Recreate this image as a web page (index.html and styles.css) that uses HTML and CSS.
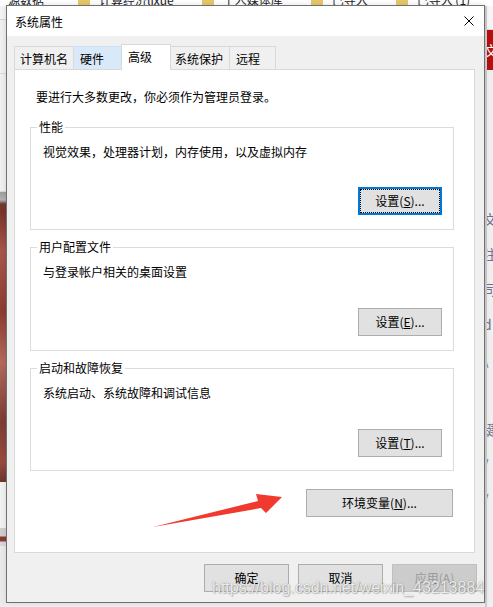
FILE: index.html
```html
<!DOCTYPE html>
<html lang="zh-CN">
<head>
<meta charset="utf-8">
<title>系统属性</title>
<link rel="stylesheet" href="styles.css">
</head>
<body>
<div class="desktop">
  <div class="files-row">
    <span class="file-name">源数据</span>
    <span class="folder"></span><span class="file-name">计算经济lixue</span>
    <span class="folder"></span><span class="file-name">个人媒体库</span>
    <span class="folder"></span><span class="file-name">已导入</span>
    <span class="folder"></span><span class="file-name">已导入 (1)</span>
  </div>
  <div class="desktop-main">
    <div class="side-left">
      <div class="sl-a"></div>
      <div class="sl-b"></div>
      <div class="sl-c"></div>
      <div class="sl-photo"></div>
      <div class="sl-d"></div>
      <div class="sl-e"></div>
      <div class="sl-f"></div>
    </div>
    <div class="side-right">
      <div class="sr-a"></div>
      <div class="sr-red">文</div>
      <div class="sr-list">
        <span>文</span><span>注</span><span>司</span><span>d</span><span>\</span><span></span><span>键</span><span>/</span><span>/</span>
      </div>
    </div>
  </div>
</div>

<div class="dialog">
  <div class="titlebar">
    <span class="title">系统属性</span>
    <svg class="close" width="10" height="10" viewBox="0 0 10 10">
      <path d="M0.5 0.5 L9.5 9.5 M9.5 0.5 L0.5 9.5" stroke="#000" stroke-width="1" fill="none"/>
    </svg>
  </div>
  <div class="dialog-body">
    <div class="tabs">
      <div class="tab tab-name">计算机名</div>
      <div class="tab tab-hw hover">硬件</div>
      <div class="tab tab-adv selected">高级</div>
      <div class="tab tab-prot">系统保护</div>
      <div class="tab tab-remote">远程</div>
    </div>
    <div class="panel">
      <p class="note">要进行大多数更改，你必须作为管理员登录。</p>

      <div class="group group-perf">
        <span class="legend">性能</span>
        <p class="desc">视觉效果，处理器计划，内存使用，以及虚拟内存</p>
        <button class="btn btn-set focused">设置(<u>S</u>)...</button>
      </div>

      <div class="group group-profile">
        <span class="legend">用户配置文件</span>
        <p class="desc">与登录帐户相关的桌面设置</p>
        <button class="btn btn-set">设置(<u>E</u>)...</button>
      </div>

      <div class="group group-startup">
        <span class="legend">启动和故障恢复</span>
        <p class="desc">系统启动、系统故障和调试信息</p>
        <button class="btn btn-set">设置(<u>T</u>)...</button>
      </div>

      <div class="env-row">
        <button class="btn btn-env">环境变量(<u>N</u>)...</button>
      </div>
    </div>
    <div class="footer">
      <button class="btn btn-foot">确定</button>
      <button class="btn btn-foot">取消</button>
      <button class="btn btn-foot disabled">应用(A)</button>
    </div>
  </div>
</div>

<svg class="arrow" width="493" height="607" viewBox="0 0 493 607">
  <polygon points="153,527 258,501 256,494 282,497 266,513 261,508" fill="#f03a30"/>
</svg>

<div class="watermark">https://blog.csdn.net/weixin_43213884</div>
</body>
</html>
```

FILE: styles.css
```css
* {
  box-sizing: border-box;
}

html, body {
  margin: 0;
  padding: 0;
}

body {
  width: 493px;
  height: 607px;
  overflow: hidden;
  position: relative;
  font-family: "Noto Sans CJK SC", "Noto Sans", sans-serif;
  font-size: 12px;
  color: #000;
  background: #f0f0f0;
}

/* ---------- desktop behind the dialog ---------- */
.desktop {
  width: 493px;
  height: 607px;
  display: flex;
  flex-direction: column;
}

.files-row {
  height: 6px;
  overflow: hidden;
  background: #fff;
  display: flex;
  align-items: flex-end;
  padding-left: 8px;
  flex: none;
}

.file-name {
  font-size: 12px;
  line-height: 14px;
  color: #1a1a2a;
  margin-bottom: -1px;
  white-space: nowrap;
}

.folder {
  width: 12px;
  height: 6px;
  background: #e8c66a;
  margin: 0 9px 0 28px;
  flex: none;
}

.file-name:first-child + .folder {
  margin-left: 34px;
}

.desktop-main {
  flex: 1;
  display: flex;
  justify-content: space-between;
}

.side-left {
  width: 6px;
  display: flex;
  flex-direction: column;
}

.sl-a {
  height: 14px;
  background: #f4f4f4;
  border-bottom: 1px solid #d4d4d4;
}

.sl-b {
  height: 54px;
  background: #f0f0f0;
  border-bottom: 1px solid #dadada;
}

.sl-c {
  height: 118px;
  background: #f0f0f0;
  border-bottom: 1px solid #dadada;
}

.sl-photo {
  height: 290px;
  background: linear-gradient(180deg, #9e9e9e 0, #b4b4b4 8px, #6e3a32 12px, #7a332b 20px, #a9574b 60px, #8e3b32 120px, #b36a5d 170px, #7d3d35 230px, #9b4b40 270px, #6a3730 290px);
}

.sl-d {
  height: 46px;
  background: #f2f2f2;
}

.sl-e {
  height: 18px;
  background: linear-gradient(180deg, #cfcfcf 0, #cfcfcf 8px, #8a3c34 9px, #8a3c34 13px, #d8d8d8 14px);
}

.sl-f {
  flex: 1;
  background: #ebebeb;
}

.side-right {
  width: 8px;
  display: flex;
  flex-direction: column;
  border-left: 2px solid #cfcfcf;
  background: #f0f0f0;
  overflow: hidden;
}

.sr-a {
  height: 24px;
  background: #f7f7f7;
  border-bottom: 1px solid #dcdcdc;
}

.sr-red {
  height: 40px;
  background: #b80f0f;
  color: #fff;
  font-size: 14px;
  line-height: 40px;
  text-indent: -3px;
  overflow: hidden;
}

.sr-list {
  display: flex;
  flex-direction: column;
  padding-top: 140px;
  color: #6f6f8f;
  font-size: 14px;
  line-height: 18px;
  text-indent: -4px;
  overflow: hidden;
}

.sr-list span {
  height: 35px;
  display: block;
  white-space: nowrap;
}

/* ---------- dialog window ---------- */
.dialog {
  position: absolute;
  left: 6px;
  top: 5px;
  width: 479px;
  height: 598px;
  border: 1px solid #707070;
  background: #f0f0f0;
  display: flex;
  flex-direction: column;
  box-shadow: 0 0 6px rgba(0, 0, 0, 0.12);
}

.titlebar {
  height: 30px;
  background: #fff;
  display: flex;
  align-items: center;
  justify-content: space-between;
  padding: 0 10px 0 8px;
  flex: none;
}

.title {
  font-size: 12px;
  line-height: 16px;
  margin-top: 1px;
}

.close {
  display: block;
}

.dialog-body {
  flex: 1;
  padding: 9px 9px 0 7px;
  display: flex;
  flex-direction: column;
}

/* tab strip */
.tabs {
  height: 25px;
  display: flex;
  align-items: flex-end;
  margin-bottom: -1px;
  position: relative;
  z-index: 1;
  flex: none;
}

.tab {
  height: 23px;
  margin-bottom: 1px;
  border: 1px solid #d9d9d9;
  border-bottom: none;
  border-right: none;
  background: #f0f0f0;
  display: flex;
  align-items: center;
  justify-content: flex-start;
  font-size: 12px;
  line-height: 16px;
  padding: 1px 0 0 6px;
}

.tab-name { width: 59px; padding-left: 5px; }
.tab-hw { width: 48px; }
.tab-adv { width: 50px; }
.tab-prot { width: 58px; padding-left: 4px; }
.tab-remote { width: 47px; border-right: 1px solid #d9d9d9; }

.tab.hover {
  background: #d8eaf9;
  border-color: #cfe0f0;
  border-left-color: #d9d9d9;
}

.tab.selected {
  height: 26px;
  margin-bottom: 0;
  background: #fff;
  border-right: 1px solid #d9d9d9;
  padding-top: 0;
  padding-bottom: 2px;
}

.tab.selected + .tab {
  border-left: none;
}

/* tab page */
.panel {
  height: 484px;
  flex: none;
  background: #fff;
  border: 1px solid #d9d9d9;
  padding: 19px 20px 0 15px;
  display: flex;
  flex-direction: column;
}

.note {
  margin: 0 0 0 6px;
  line-height: 16px;
}

.group {
  border: 1px solid #dcdcdc;
  display: flex;
  flex-direction: column;
  align-items: flex-start;
  padding: 0 11px 14px 12px;
}

.group-perf { height: 103px; margin-top: 22px; }
.group-profile { height: 104px; margin-top: 17px; }
.group-startup { height: 103px; margin-top: 17px; padding-bottom: 13px; }

.legend {
  background: #fff;
  line-height: 14px;
  padding: 0 2px;
  margin: -8px 0 0 -6px;
}

.desc {
  margin: 10px 0 0 0;
  line-height: 16px;
}

/* push buttons */
.btn {
  font-family: "Noto Sans CJK SC", "Noto Sans", sans-serif;
  font-size: 12px;
  line-height: 16px;
  color: #000;
  background: #e1e1e1;
  border: 1px solid #adadad;
  border-radius: 0;
  height: 28px;
  padding: 0;
  margin: 0;
  display: flex;
  align-items: center;
  justify-content: center;
}

.btn u {
  text-underline-offset: 1px;
}

.btn-set {
  width: 84px;
  margin-top: auto;
  align-self: flex-end;
}

.btn.focused {
  border: 2px solid #0078d7;
  outline: 1px dotted #000;
  outline-offset: -3px;
}

.env-row {
  margin-top: 18px;
  display: flex;
  justify-content: flex-end;
  padding-right: 1px;
}

.btn-env {
  width: 147px;
}

.footer {
  margin-top: 11px;
  margin-right: -2px;
  display: flex;
  justify-content: flex-end;
  gap: 9px;
}

.btn-foot {
  width: 85px;
}

.btn.disabled {
  background: #cccccc;
  border-color: #bfbfbf;
  color: #9a9a9a;
}

/* ---------- overlays ---------- */
.arrow {
  position: absolute;
  left: 0;
  top: 0;
  pointer-events: none;
}

.watermark {
  position: absolute;
  left: 212px;
  top: 579px;
  font-family: "Liberation Sans", Arial, sans-serif;
  font-size: 16px;
  line-height: 18px;
  color: rgba(255, 255, 255, 0.85);
  text-shadow: 0 0 1px rgba(90, 90, 90, 0.7), 1px 1px 1px rgba(0, 0, 0, 0.2);
  white-space: nowrap;
  pointer-events: none;
}
```
